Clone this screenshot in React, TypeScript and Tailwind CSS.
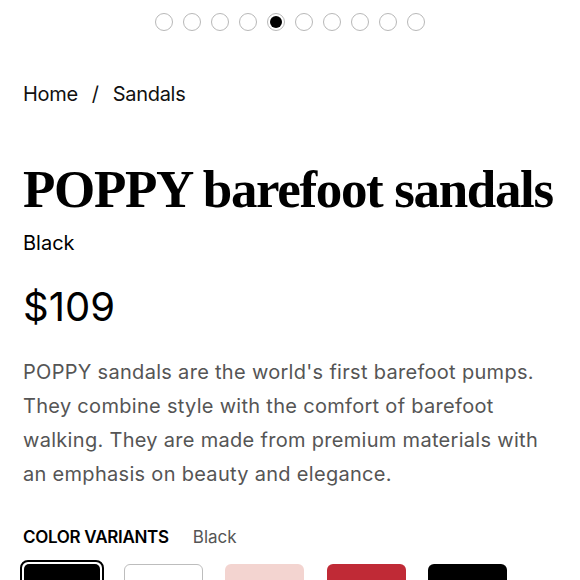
import React from 'react';

const dots = Array.from({ length: 10 }, (_, i) => i);
const swatches = [
  { name: 'Black', cls: 'bg-black', selected: true },
  { name: 'White', cls: 'bg-white border border-[#bdbdbd]', selected: false },
  { name: 'Blush', cls: 'bg-[#f3d4d0]', selected: false },
  { name: 'Red', cls: 'bg-[#c02a36]', selected: false },
  { name: 'Noir', cls: 'bg-black', selected: false },
];

export default function App() {
  return (
    <div className="w-[580px] h-[580px] overflow-hidden bg-white text-black font-['Inter','Liberation_Sans',sans-serif]">
      {/* slider dots */}
      <div className="flex justify-center gap-[10px] pt-[13px]">
        {dots.map(i => (
          <div key={i} className="w-[18px] h-[18px] rounded-full border border-[#b8b8b8] flex items-center justify-center">
            {i === 4 && <div className="w-[12px] h-[12px] rounded-full bg-black" />}
          </div>
        ))}
      </div>

      <div className="px-[23px]">
        <nav className="mt-[51px] flex items-center text-[20px] leading-[24px] text-[#111] tracking-[-0.3px]">
          <span>Home</span>
          <span className="mx-[14px]">/</span>
          <span>Sandals</span>
        </nav>

        <h1 className="mt-[53px] font-['Liberation_Serif',serif] font-bold text-[53px] leading-[60px] tracking-[-1.35px] whitespace-nowrap">
          POPPY barefoot sandals
        </h1>
        <p className="mt-[12px] text-[20px] leading-[24px]">Black</p>

        <p className="mt-[27px] text-[40px] leading-[50px]">$109</p>

        <p className="mt-[23px] text-[20px] leading-[34px] text-[#555] tracking-[0.3px]">
          POPPY sandals are the world's first barefoot pumps. They combine style with the comfort of barefoot walking. They are made from premium materials with an emphasis on beauty and elegance.
        </p>

        <div className="mt-[36px] flex items-center text-[17px] leading-[20px]">
          <span className="font-semibold uppercase tracking-[-0.3px]">Color variants</span>
          <span className="ml-[24px] text-[#555]">Black</span>
        </div>

        <div className="mt-[13px] flex items-start gap-[22.5px] -ml-[1px]">
          {swatches.map(s =>
            s.selected ? (
              <div key={s.name} className="-ml-[2px] -mr-[3px] border-2 border-black rounded-[8px] p-[2px]">
                <div className={`w-[76px] h-[40px] rounded-[5px] ${s.cls}`} />
              </div>
            ) : (
              <div key={s.name} className={`mt-[4px] w-[79px] h-[40px] rounded-[6px] ${s.cls}`} />
            )
          )}
        </div>
      </div>
    </div>
  );
}
